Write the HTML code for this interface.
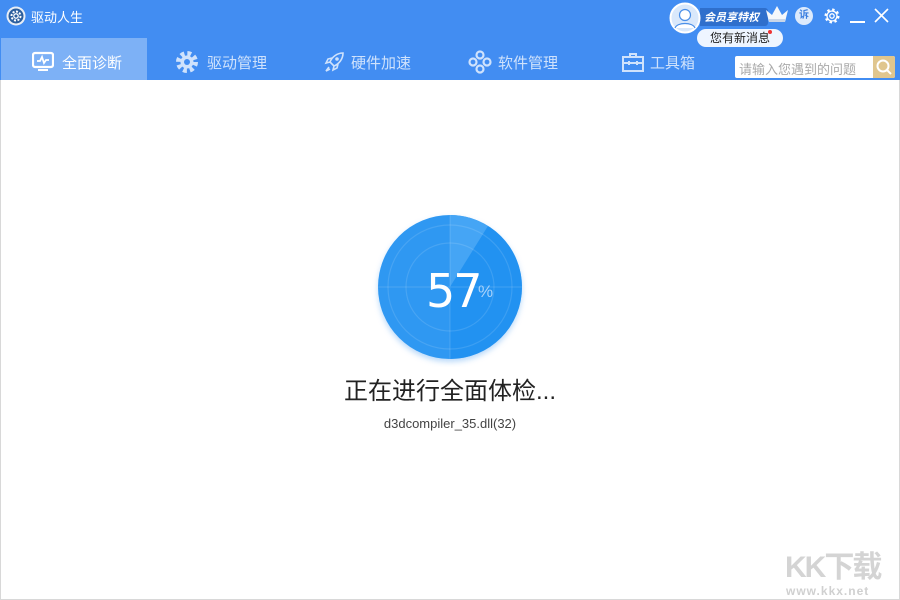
<!DOCTYPE html>
<html><head><meta charset="utf-8"><style>
*{margin:0;padding:0;box-sizing:border-box}
body{width:900px;height:600px;overflow:hidden;background:#fff;font-family:"Liberation Sans","Noto Sans CJK SC",sans-serif;position:relative}
.hdr{position:absolute;left:0;top:0;width:900px;height:80px;background:#428df2}
.tab{position:absolute;top:38px;height:42px;padding-top:6px;color:#cfe2fc;font-size:15px;display:flex;align-items:center}
.tab.act{left:1px;width:146px;background:#7db1f6;color:#fff}
.abs{position:absolute}
</style></head><body>
<div class="hdr"></div>
<svg class="abs" style="left:6px;top:6px" width="20" height="20" viewBox="0 0 20 20"><circle cx="10" cy="10" r="9.5" fill="#e8eef6"/><circle cx="10" cy="10" r="7.5" fill="#2c5f9e"/><circle cx="10" cy="10" r="4.5" fill="none" stroke="#fff" stroke-width="2" stroke-dasharray="2 1.5"/><circle cx="10" cy="10" r="2.2" fill="none" stroke="#fff" stroke-width="1.3"/></svg>
<div class="abs" style="left:31px;top:7px;color:#fff;font-size:13px">驱动人生</div>

<div class="tab act"><svg style="margin-left:31px;margin-right:8px" width="22" height="22" viewBox="0 0 22 22"><rect x="1" y="2" width="20" height="14" rx="2" fill="none" stroke="#fff" stroke-width="2.2"/><path d="M5 10h3l2-4 2 6 2-3h3" fill="none" stroke="#fff" stroke-width="1.8"/><rect x="6" y="18" width="10" height="2" fill="#fff"/></svg>全面诊断</div>
<div class="tab" style="left:175px"><svg style="margin-right:8px" width="24" height="24" viewBox="0 0 24 24"><circle cx="12" cy="12" r="8" fill="none" stroke="#cfe2fc" stroke-width="6" stroke-dasharray="3.5 2.8"/><circle cx="12" cy="12" r="6.5" fill="#cfe2fc"/><circle cx="12" cy="12" r="3" fill="#428df2"/></svg>驱动管理</div>
<div class="tab" style="left:323px"><svg style="margin-right:6px" width="22" height="22" viewBox="0 0 22 22"><path d="M20 2C14 2 9 6 7 11l4 4c5-2 9-7 9-13zM7 11l-4 1 2-4 4-1M11 15l-1 4 4-2 1-4M6 16l-3 4 4-2" fill="none" stroke="#cfe2fc" stroke-width="1.6"/><circle cx="14" cy="8" r="1.8" fill="#cfe2fc"/></svg>硬件加速</div>
<div class="tab" style="left:468px"><svg style="margin-right:6px" width="24" height="24" viewBox="0 0 24 24"><g fill="none" stroke="#cfe2fc" stroke-width="2.2"><circle cx="12" cy="5" r="3.5"/><circle cx="12" cy="19" r="3.5"/><circle cx="5" cy="12" r="3.5"/><circle cx="19" cy="12" r="3.5"/></g></svg>软件管理</div>
<div class="tab" style="left:622px"><svg style="margin-right:6px" width="22" height="22" viewBox="0 0 22 22"><rect x="1" y="6" width="20" height="14" fill="none" stroke="#cfe2fc" stroke-width="2"/><path d="M8 6V3h6v3M1 12h20M7 10v4M15 10v4" fill="none" stroke="#cfe2fc" stroke-width="2"/></svg>工具箱</div>

<div class="abs" style="left:735px;top:56px;width:160px;height:22px;background:#fff;border-radius:2px"></div>
<div class="abs" style="left:739px;top:59px;font-size:13px;color:#aaa">请输入您遇到的问题</div>
<div class="abs" style="left:873px;top:56px;width:22px;height:22px;background:#e0c68e;border-radius:0 2px 2px 0"><svg width="22" height="22" viewBox="0 0 22 22"><circle cx="10" cy="10" r="5.5" fill="none" stroke="#fff" stroke-width="2"/><path d="M14 14l4 4" stroke="#fff" stroke-width="2"/></svg></div>

<div class="abs" style="left:700px;top:8px;width:68px;height:18px;background:#2f6fcc;border-radius:0 3px 3px 0"></div>
<div class="abs" style="left:704px;top:9px;font-size:11px;color:#fff;font-weight:bold;font-style:italic">会员享特权</div>
<svg class="abs" style="left:669px;top:2px" width="32" height="32" viewBox="0 0 32 32"><circle cx="16" cy="16" r="14.5" fill="#d9e8fb" stroke="#fff" stroke-width="2"/><circle cx="16" cy="13" r="5.5" fill="#fff" stroke="#4a8fe8" stroke-width="1.2"/><path d="M6 26c2-6 18-6 20 0" fill="#fff" stroke="#4a8fe8" stroke-width="1.2"/></svg>
<svg class="abs" style="left:764px;top:4px" width="26" height="20" viewBox="0 0 26 20"><path d="M2 6l6 5 5-9 5 9 6-5-3 12H5z" fill="#f4f7fb"/><rect x="5" y="15" width="16" height="3" fill="#c9d6e8"/></svg>
<div class="abs" style="left:697px;top:29px;width:86px;height:18px;background:#eef5ff;border-radius:9px;font-size:12px;color:#222;text-align:center;line-height:18px">您有新消息</div>
<div class="abs" style="left:768px;top:30px;width:4px;height:4px;background:#e33;border-radius:2px"></div>
<div class="abs" style="left:795px;top:7px;width:18px;height:18px;background:#dceafc;border-radius:9px;font-size:10px;color:#3b7fe0;text-align:center;line-height:18px;font-weight:bold">诉</div>
<svg class="abs" style="left:823px;top:7px" width="18" height="18" viewBox="0 0 18 18"><circle cx="9" cy="9" r="6" fill="none" stroke="#fff" stroke-width="3" stroke-dasharray="2.3 2.4"/><circle cx="9" cy="9" r="5" fill="none" stroke="#fff" stroke-width="1.3"/><circle cx="9" cy="9" r="2.2" fill="none" stroke="#fff" stroke-width="1.3"/></svg>
<div class="abs" style="left:850px;top:21px;width:15px;height:1.5px;background:#fff"></div>
<svg class="abs" style="left:874px;top:8px" width="15" height="15" viewBox="0 0 15 15"><path d="M1 1l13 13M14 1L1 14" stroke="#fff" stroke-width="1.6"/></svg>

<div class="abs" style="left:0;top:80px;width:1px;height:520px;background:#d8d8d8"></div>
<div class="abs" style="left:899px;top:80px;width:1px;height:520px;background:#d8d8d8"></div>
<div class="abs" style="left:0;top:599px;width:900px;height:1px;background:#d8d8d8"></div>

<svg class="abs" style="left:370px;top:207px" width="160" height="160" viewBox="0 0 160 160">
<defs><filter id="s"><feGaussianBlur stdDeviation="3"/></filter></defs>
<circle cx="80" cy="83" r="72" fill="#9cc9f7" filter="url(#s)" opacity=".7"/>
<circle cx="80" cy="80" r="72" fill="#2f98f2"/>
<path d="M80 80L80 8A72 72 0 0 1 118 19Z" fill="#45a5f5"/>
<path d="M80 80L118 19A72 72 0 0 1 152 80A72 72 0 0 1 80 152Z" fill="#1b8ef0" opacity=".6"/>
<g fill="none" stroke="#fff" stroke-opacity=".12" stroke-width="1.2"><circle cx="80" cy="80" r="62"/><circle cx="80" cy="80" r="44"/><path d="M80 8v144M8 80h144"/></g>
</svg>
<div class="abs" style="left:426px;top:264px;font-size:46px;color:#fff;font-family:'DejaVu Sans',sans-serif;letter-spacing:-2px">57</div>
<div class="abs" style="left:478px;top:282px;font-size:17px;color:#a8d2fa">%</div>

<div class="abs" style="left:0;top:371px;width:900px;text-align:center;font-size:24px;color:#222">正在进行全面体检...</div>
<div class="abs" style="left:0;top:416px;width:900px;text-align:center;font-size:13px;color:#444">d3dcompiler_35.dll(32)</div>

<div class="abs" style="left:785px;top:542px;font-size:30px;font-weight:bold;color:#d4d4d4;letter-spacing:-2px">KK下载</div>
<div class="abs" style="left:786px;top:584px;font-size:12px;font-weight:bold;color:#d0d0d0;letter-spacing:1px">www.kkx.net</div>
</body></html>
